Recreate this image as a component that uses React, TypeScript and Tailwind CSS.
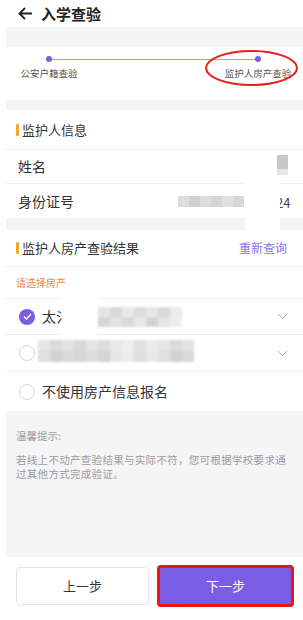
import React from "react";

const font = { fontFamily: '"Noto Sans CJK SC", "Noto Sans", sans-serif' };

function Mosaic({ cols, shades, h }: { cols: number; shades: string[]; h: number }) {
  return (
    <div className="flex flex-col">
      {shades.map((row, r) => (
        <div key={r} className="flex">
          {Array.from({ length: cols }).map((_, i) => (
            <div
              key={i}
              style={{ width: 12, height: h, background: row.split(",")[i % row.split(",").length] }}
            />
          ))}
        </div>
      ))}
    </div>
  );
}

function Chevron() {
  return (
    <svg width="11" height="7" viewBox="0 0 11 7" className="shrink-0">
      <path d="M1 1 L5.5 5.5 L10 1" fill="none" stroke="#aaa" strokeWidth="1" />
    </svg>
  );
}

export default function App() {
  return (
    <div className="relative w-[303px] h-[620px] bg-white overflow-hidden text-[#333]" style={font}>
      {/* header */}
      <div className="h-[27px] flex items-center pl-[18px] gap-[8px]">
        <svg width="15" height="13" viewBox="0 0 15 13">
          <path d="M14 6.5 H2 M7 1 L1.5 6.5 L7 12" fill="none" stroke="#222" strokeWidth="1.8" />
        </svg>
        <span className="text-[15px] font-bold text-[#222] leading-none">入学查验</span>
      </div>

      <div className="ml-[6px]">
        <div className="h-[20px] bg-[#f5f5f5]" />

        {/* stepper */}
        <div className="relative h-[53px]">
          <div className="absolute left-[43px] right-[48px] top-[11.5px] h-px bg-[#a795ee]" />
          <div className="flex justify-between pl-[14px] pr-[12px] pt-[9px]">
            <div className="flex flex-col items-center w-[58px]">
              <div className="w-[6px] h-[6px] rounded-full bg-[#7b5ce4] relative" />
              <span className="text-[9.5px] leading-[12px] mt-[5px] text-[#555] whitespace-nowrap">公安户籍查验</span>
            </div>
            <div className="flex flex-col items-center w-[66px]">
              <div className="w-[6px] h-[6px] rounded-full bg-[#7b5ce4] relative" />
              <span className="text-[9.5px] leading-[12px] mt-[5px] text-[#555] whitespace-nowrap">监护人房产查验</span>
            </div>
          </div>
          <div className="absolute left-[199px] top-[3px] w-[93px] h-[36px] rounded-[50%] border-2 border-[#e8201a]" />
        </div>

        <div className="h-[10px] bg-[#f5f5f5]" />

        {/* guardian info */}
        <div className="relative">
          <div className="h-[40px] flex items-center pl-[10px] gap-[3px] border-b border-[#efefef]">
            <div className="w-[3px] h-[12px] bg-[#f5a623] rounded-[1px]" />
            <span className="text-[13px]">监护人信息</span>
          </div>
          <div className="h-[34px] flex items-center pl-[12px] border-b border-[#efefef]">
            <span className="text-[14px]">姓名</span>
          </div>
          <div className="h-[34px] flex items-center pl-[12px] relative">
            <span className="text-[14px]">身份证号</span>
            <div className="absolute left-[172px] top-[12px] flex">
              {["#ddd", "#d0d0d0", "#dcdcdc", "#d4d4d4", "#e0e0e0", "#d6d6d6"].map((c, i) => (
                <div key={i} style={{ width: 11, height: 11, background: c }} />
              ))}
            </div>
            <span className="absolute left-[270px] top-[9px] text-[13px] text-[#444]">24</span>
          </div>
          <div className="h-[12px] bg-[#f5f5f5]" />
          {/* blur overlay */}
          <div className="absolute left-[239px] top-[40px] w-[35px] h-[80px] bg-white" />
          <div className="absolute left-[271px] top-[45px] w-[11px] h-[14px] bg-[#c8c8c8]" />
          <div className="absolute left-[271px] top-[59px] w-[11px] h-[6px] bg-[#e6e6e6]" />
        </div>

        {/* property result */}
        <div className="h-[37px] flex items-center pl-[10px] pr-[16px] gap-[3px] border-b border-[#efefef]">
          <div className="w-[3px] h-[12px] bg-[#f5a623] rounded-[1px]" />
          <span className="text-[13px] flex-1">监护人房产查验结果</span>
          <span className="text-[12px] text-[#8c72ee]">重新查询</span>
        </div>
        <div className="h-[32px] flex items-center pl-[10px] border-b border-[#efefef]">
          <span className="text-[10px] text-[#f0883a]">请选择房产</span>
        </div>

        <div className="relative h-[36px] flex items-center pl-[13px] pr-[15px] border-b border-[#efefef]">
          <div className="w-[16px] h-[16px] rounded-full bg-[#7b5ce4] flex items-center justify-center">
            <svg width="9" height="7" viewBox="0 0 9 7">
              <path d="M1 3.5 L3.5 6 L8 1" fill="none" stroke="white" strokeWidth="1.4" />
            </svg>
          </div>
          <span className="ml-[7px] text-[14px]">太氵</span>
          <div className="flex-1" />
          <Chevron />
          <div className="absolute left-[56px] top-[-2px] w-[36px] h-[46px] bg-white" />
          <div className="absolute left-[92px] top-[8px] blur-[1px]">
            <Mosaic cols={7} h={10} shades={["#e4e4e4,#d8d8d8,#e8e8e8,#dcdcdc,#e6e6e6,#d9d9d9,#ececec", "#d6d6d6,#e2e2e2,#dadada,#e8e8e8,#d4d4d4,#e4e4e4,#eeeeee"]} />
          </div>
        </div>

        <div className="relative h-[37px] flex items-center pl-[13px] pr-[15px] border-b border-[#efefef]">
          <div className="w-[16px] h-[16px] rounded-full border border-[#d8d8d8] bg-white" />
          <div className="flex-1" />
          <Chevron />
          <div className="absolute left-[32px] top-[5px] blur-[1px]">
            <Mosaic cols={13} h={11} shades={["#e6e6e6,#dadada,#e2e2e2,#d8d8d8,#e4e4e4,#dcdcdc,#e8e8e8,#eeeeee,#e0e0e0,#eaeaea", "#e0e0e0,#d2d2d2,#dadada,#d6d6d6,#dddddd,#d4d4d4,#e6e6e6,#ececec,#dedede,#e8e8e8"]} />
          </div>
        </div>

        <div className="h-[39px] flex items-center pl-[13px]">
          <div className="w-[16px] h-[16px] rounded-full border border-[#d8d8d8] bg-white" />
          <span className="ml-[7px] text-[14px]">不使用房产信息报名</span>
        </div>

        {/* tip */}
        <div className="h-[146px] bg-[#f5f5f5] pl-[10px] pr-[10px] pt-[18px] text-[#9a9aa5]">
          <div className="text-[10.5px] leading-[14px]">温馨提示:</div>
          <div className="text-[10.5px] leading-[14px] mt-[10px] tracking-[0.3px]">
            若线上不动产查验结果与实际不符，您可根据学校要求通过其他方式完成验证。
          </div>
        </div>
      </div>

      {/* buttons */}
      <div className="flex pl-[16px] pr-[9px] pt-[10px] gap-[8px]">
        <button className="w-[133px] h-[38px] rounded-[4px] border border-[#e5e5e5] bg-white text-[13px] text-[#333]">
          上一步
        </button>
        <button className="w-[137px] h-[42px] -mt-[2px] rounded-[4px] border-[3px] border-[#f0140f] bg-[#7b5ce4] text-[13px] text-white">
          下一步
        </button>
      </div>
    </div>
  );
}
